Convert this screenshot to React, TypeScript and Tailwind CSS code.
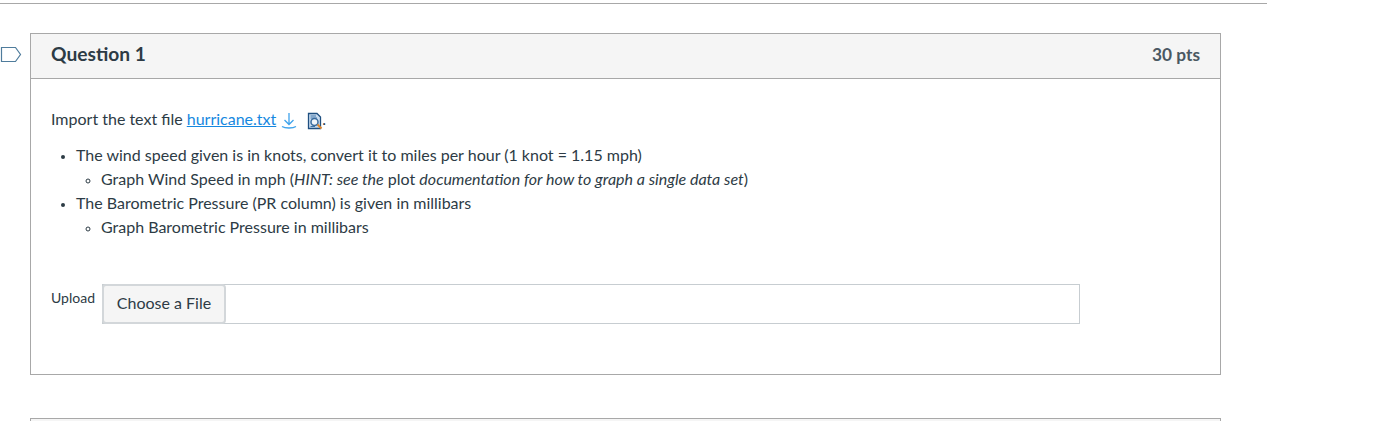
import React from "react"

const Marker = () => (
  <svg width="22" height="17" viewBox="0 0 22 17" className="absolute left-0 top-[42px]" fill="none">
    <path d="M1.5 1.5H15.5L20.5 8.5L15.5 15.5H1.5Z" stroke="#4f7c9c" strokeWidth="1.2" />
  </svg>
)

const DownloadIcon = () => (
  <svg width="16" height="18" viewBox="0 0 16 18" fill="none" stroke="#3fa3ec" strokeWidth="1.3" className="ml-[5px] mt-[3px]">
    <path d="M8 1V12.5M3.5 8L8 12.5L12.5 8" />
    <path d="M1 14.5C4 16.5 12 16.5 15 14.5" />
  </svg>
)

const PreviewIcon = () => (
  <svg width="17" height="18" viewBox="0 0 17 18" fill="none" className="ml-[10px] mt-[3px]">
    <path d="M1.5 1.5H10L13.5 5V16.5H1.5Z" fill="#c9dcf0" stroke="#1f4f80" strokeWidth="1.3" />
    <path d="M3.5 4H9M3.5 6H10" stroke="#3f74a8" strokeWidth="1" />
    <path d="M3.5 14.5H8" stroke="#3f74a8" strokeWidth="1" />
    <circle cx="7.5" cy="10" r="3.5" fill="#eef4fa" stroke="#3a6c9e" strokeWidth="1.5" />
    <path d="M10.5 12.5L14.5 16.5" stroke="#e0862a" strokeWidth="2" />
  </svg>
)

export default function App() {
  return (
    <div className="bg-white overflow-hidden font-['Lato','Open_Sans',sans-serif] text-[#2d3b45] h-[421px]">
      <div className="mt-[3px] h-px w-[1267px] bg-[#a8a8a8]" />
      <div className="relative pl-[30px] pt-[29px]">
        <Marker />
        <div className="w-[1191px] h-[342px] border border-[#a8a8a8] flex flex-col">
          <div className="h-[45px] bg-[#f5f5f5] border-b border-[#a8a8a8] flex items-center justify-between px-5 pb-1 shrink-0">
            <h2 className="text-[19.2px] font-bold">Question 1</h2>
            <span className="text-[17.3px] font-bold text-[#4a5862] mt-[2px]">30 pts</span>
          </div>
          <div className="pl-5 pt-[28px] text-base leading-6">
            <p className="flex items-center">
              Import the text file&nbsp;
              <a className="text-[#1688e0] underline">hurricane.txt</a>
              <DownloadIcon />
              <PreviewIcon />
              <span className="-ml-[2px]">.</span>
            </p>
            <ul className="mt-3 pl-[25px] list-disc marker:text-[13px]">
              <li>
                The wind speed given is in knots, convert it to miles per hour (1 knot = 1.15 mph)
                <ul className="pl-[25px] list-[circle] marker:text-[13px]">
                  <li>
                    Graph Wind Speed in mph (<em>HINT: see the</em> plot <em>documentation for how to graph a single data set</em>)
                  </li>
                </ul>
              </li>
              <li>
                The Barometric Pressure (PR column) is given in millibars
                <ul className="pl-[25px] list-[circle] marker:text-[13px]">
                  <li>Graph Barometric Pressure in millibars</li>
                </ul>
              </li>
            </ul>
            <div className="mt-[45px] flex items-start">
              <label className="text-sm leading-5 mt-[4px] w-[51px] shrink-0">Upload</label>
              <div className="relative w-[978px] h-10 border border-[#c7cdd1]">
                <button className="absolute -left-px -top-px h-10 w-[124px] pb-[2px] bg-[#f5f5f5] border-2 border-[#d3d7da] rounded-[4px] text-base text-[#2d3b45]">
                  Choose a File
                </button>
              </div>
            </div>
          </div>
        </div>
        <div className="mt-[43px] w-[1191px] h-8 border border-[#a8a8a8] bg-[#f5f5f5]" />
      </div>
    </div>
  )
}
